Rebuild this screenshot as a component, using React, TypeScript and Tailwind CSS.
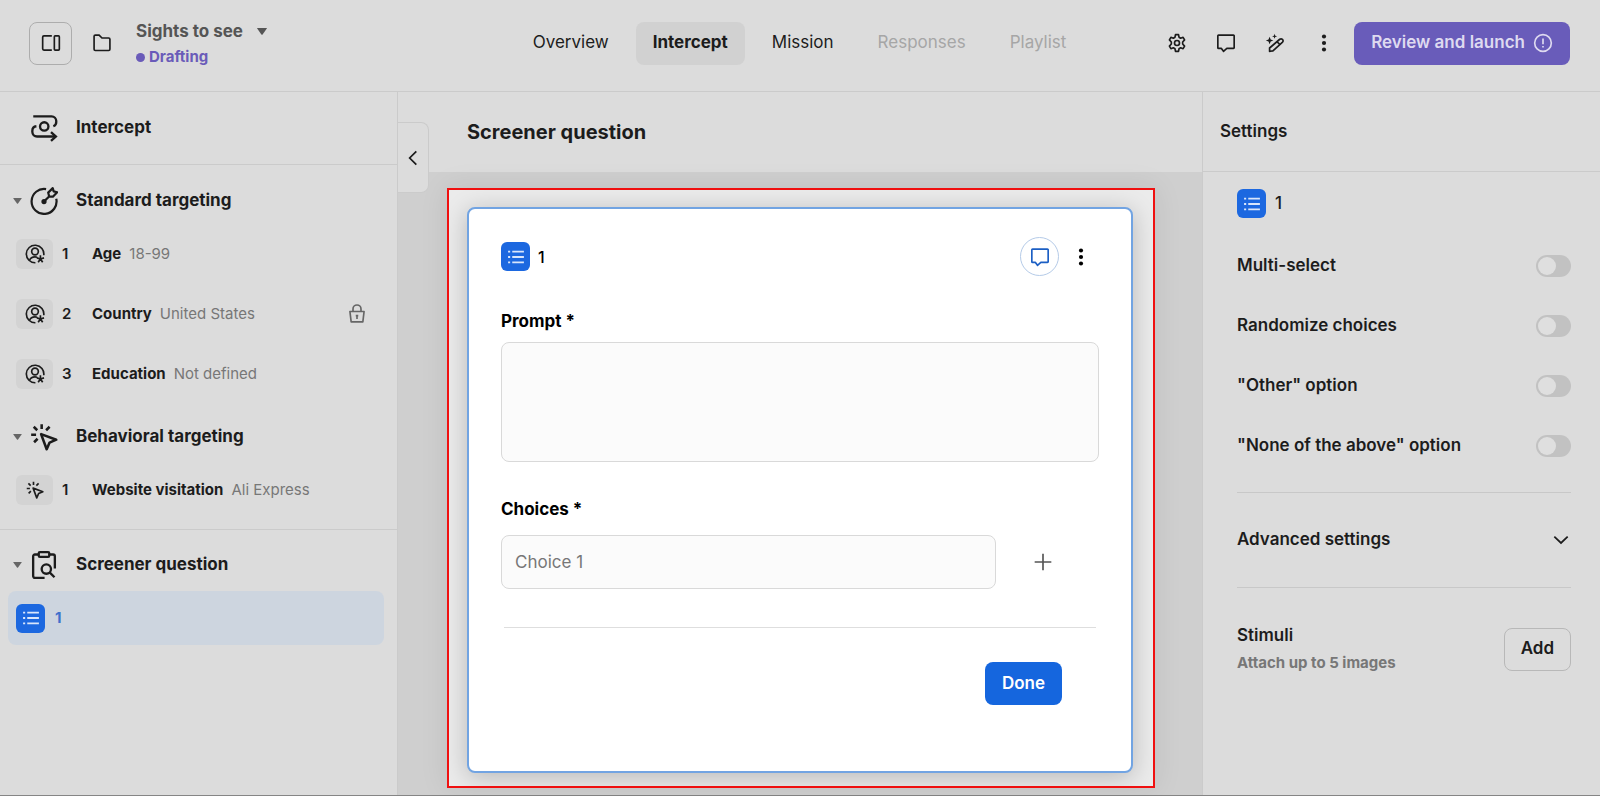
import type { ReactNode } from 'react';
import clsx from 'clsx';

type IconProps = { className?: string };

const Svg = ({ className, children, stroke = 2 }: IconProps & { children: ReactNode; stroke?: number }) => (
    <svg
        viewBox="0 0 24 24"
        className={clsx('shrink-0', className)}
        fill="none"
        stroke="currentColor"
        strokeWidth={stroke}
        aria-hidden="true"
    >
        {children}
    </svg>
);

const PanelIcon = () => (
    <Svg className="size-5">
        <path d="M13 3.500H3.500a1.500 1.500 0 0 0-1.500 1.500v14a1.500 1.500 0 0 0 1.500 1.500H13" />
        <rect x="16" y="3.500" width="6" height="17" rx="1" />
    </Svg>
);

const FolderIcon = () => (
    <Svg className="size-5">
        <path d="M2.500 4a1.500 1.500 0 0 1 1.500-1.500h4.500l3.500 3.500h8a1.500 1.500 0 0 1 1.500 1.500v12a1.500 1.500 0 0 1-1.500 1.500H4a1.500 1.500 0 0 1-1.500-1.500z" />
    </Svg>
);

const CaretIcon = ({ className }: IconProps) => (
    <svg viewBox="0 0 10 7" className={clsx('shrink-0', className)} fill="currentColor" aria-hidden="true">
        <path d="M.4 0h9.200q.6 0 .2.600L5.600 6.500q-.6.700-1.200 0L.2.600Q-.2 0 .4 0z" />
    </svg>
);

const GearIcon = () => (
    <Svg className="size-5">
        <path
            strokeLinejoin="round"
            d="M10.200 2h3.600l.6 3 2 1.200 2.900-1 1.800 3.100L18.800 10.800v2.400l2.300 2.500-1.800 3.100-2.900-1-2 1.200-.6 3h-3.600l-.6-3-2-1.200-2.900 1-1.800-3.100 2.300-2.500v-2.400L2.900 8.300l1.800-3.100 2.900 1 2-1.200z"
        />
        <circle cx="12" cy="12" r="3" />
    </Svg>
);

const CommentIcon = () => (
    <Svg className="size-5">
        <path strokeLinejoin="round" d="M3 2.500h18a.8.8 0 0 1 .8.800v14.400a.8.800 0 0 1-.8.800h-8l-4 3.500-2.500-3.500H3a.8.800 0 0 1-.8-.8V3.300a.8.800 0 0 1 .8-.8z" />
    </Svg>
);

const WandIcon = () => (
    <Svg className="size-5">
        <path strokeLinejoin="round" d="M5.500 22v-4L17.700 7.500q1.700-1.200 3.200.2t.2 3.200L9.500 21.500z" />
        <path d="M14.500 10.500l3.500 3.500" />
        <path
            fill="currentColor"
            stroke="none"
            d="M5.500 4.500l1.300 3.200L10 9l-3.200 1.300-1.300 3.200-1.300-3.200L1 9l3.200-1.300zM11.500 1l.8 2.200 2.200.8-2.200.8-.8 2.200-.8-2.200-2.200-.8 2.200-.8z"
        />
    </Svg>
);

const DotsIcon = () => (
    <svg viewBox="0 0 24 24" className="size-5" fill="currentColor" aria-hidden="true">
        <circle cx="12" cy="4.200" r="2.500" />
        <circle cx="12" cy="12" r="2.500" />
        <circle cx="12" cy="19.800" r="2.500" />
    </svg>
);

const AlertIcon = () => (
    <Svg className="size-5">
        <circle cx="12" cy="12" r="10" />
        <path d="M12 6.500v7M12 15.500v2" />
    </Svg>
);

const PathIcon = () => (
    <Svg className="size-7">
        <path d="M2.800 2h15.700a4 4 0 0 1 4 4v.5a4 4 0 0 1-2.500 4M5.500 10.500a4 4 0 0 0-3.500 4v.8a4 4 0 0 0 4 4h16" />
        <path d="M18 15.500l4.200 3.800-4.200 3.800" />
        <circle cx="12.200" cy="10.700" r="3.600" />
    </Svg>
);

const TargetIcon = () => (
    <Svg className="size-7" stroke={1.900}>
        <path d="M13.800 1.800A10.700 10.700 0 1 0 22.500 10" />
        <circle cx="12" cy="12.500" r="1.300" fill="currentColor" />
        <path strokeLinejoin="round" d="M12 12.500l5-5M16.400 8l-.8-3.200L19.500 1l.8 2.800 3 .7-3.700 3.800z" />
    </Svg>
);

const ClickIcon = ({ className }: IconProps) => (
    <Svg className={className} stroke={2.200}>
        <path strokeLinejoin="round" d="M9.500 9.500l13 4.800-5.700 2.500-2.500 5.700z" />
        <path d="M1 10h4.200M3.200 3.200l3 3M10 1v4.200M16.800 3.200l-3 3M3.500 16.500l3-3" />
    </Svg>
);

const ClipboardIcon = () => (
    <Svg className="size-7">
        <path d="M7 3H4.200A1.500 1.500 0 0 0 2.700 4.500v17A1.500 1.500 0 0 0 4.200 23H12.500M17 3h2.800a1.500 1.500 0 0 1 1.500 1.500V15" />
        <rect x="7.500" y="1" width="9" height="4" rx="1" />
        <circle cx="14" cy="15.500" r="4" />
        <path d="M16.800 18.300l4.200 4.200" />
    </Svg>
);

const PersonIcon = () => (
    <Svg className="size-5" stroke={2}>
        <path d="M12.500 22.500A10.500 10.500 0 1 1 22.500 13.500" />
        <circle cx="12" cy="9" r="4" />
        <path d="M5.500 19.500q1.500-4 6.500-4 1.500 0 2.500.4" />
        <path d="M18.500 13.500v4.500M18.500 18l4.300-1.400M18.500 18l-4.300-1.400M18.500 18l2.700 4M18.500 18l-2.700 4" />
    </Svg>
);

const LockIcon = () => (
    <Svg className="size-5">
        <path strokeLinejoin="round" d="M3.500 9h17L19 21.500H5z" />
        <path d="M7.200 9V6a4.800 4.800 0 0 1 9.600 0v3M12 13v5M10.500 14h3" />
    </Svg>
);

const ListBadge = () => (
    <span className="grid size-[29px] shrink-0 place-items-center rounded-md bg-[#1c68e0] text-[#d9e6fb]">
        <Svg className="size-5" stroke={2.200}>
            <path d="M7.500 5.500h14M7.500 12h14M7.500 18.500h14M2.500 5.500h2.500M2.500 12h2.500M2.500 18.500h2.500" />
        </Svg>
    </span>
);

const tabs = [
    { label: 'Overview' },
    { label: 'Intercept', active: true },
    { label: 'Mission' },
    { label: 'Responses', disabled: true },
    { label: 'Playlist', disabled: true }
];

const standardTargeting = [
    { label: 'Age', value: '18-99' },
    { label: 'Country', value: 'United States', locked: true },
    { label: 'Education', value: 'Not defined' }
];

const options = ['Multi-select', 'Randomize choices', '"Other" option', '"None of the above" option'];

const SectionHeader = ({ icon, title }: { icon: ReactNode; title: string }) => (
    <button type="button" aria-expanded="true" className="flex h-[52px] w-full items-center pl-[13px] text-left">
        <CaretIcon className="h-[6px] w-[9px] text-[#666]" />
        <span className="ml-2 flex w-[46px]">{icon}</span>
        <span className="text-[17px] font-bold">{title}</span>
    </button>
);

type TargetRowProps = { icon: ReactNode; index: number; label: string; value: string; locked?: boolean };

const TargetRow = ({ icon, index, label, value, locked }: TargetRowProps) => (
    <li className="flex h-[54px] items-center pr-[30px] pl-4 text-[15px]">
        <span className="grid h-[30px] w-[37px] place-items-center rounded-md bg-[#d3d3d3]">{icon}</span>
        <span className="ml-[9px] w-[30px] font-semibold">{index}</span>
        <span className="font-bold">{label}</span>
        <span className="ml-2 text-[#777]">{value}</span>
        {locked && (
            <span className="ml-auto text-[#666]">
                <LockIcon />
            </span>
        )}
    </li>
);

const Header = () => (
    <header className="flex h-[92px] items-center justify-between border-b border-[#cbcbcb] pr-[30px] pb-[5px] pl-[29px]">
        <div className="flex flex-1 items-center">
            <button
                type="button"
                aria-label="Toggle panel"
                className="grid size-[43px] place-items-center rounded-lg border border-[#adadad]"
            >
                <PanelIcon />
            </button>
            <button type="button" aria-label="Folder" className="ml-5">
                <FolderIcon />
            </button>
            <div className="ml-6 pt-1">
                <button type="button" className="flex items-center gap-[14px] text-[17px] leading-6 font-bold text-[#555]">
                    Sights to see
                    <CaretIcon className="h-[7px] w-[10px]" />
                </button>
                <p className="flex items-center gap-1 text-[15px] leading-7 font-bold text-[#6a5bb9]">
                    <span className="size-[9px] rounded-full bg-[#6a5bb9]" />
                    Drafting
                </p>
            </div>
        </div>

        <nav className="flex gap-[10px] text-[17px]">
            {tabs.map(({ label, active, disabled }) => (
                <button
                    key={label}
                    type="button"
                    disabled={disabled}
                    className={clsx(
                        'h-[43px] rounded-lg px-[17px]',
                        active && 'bg-[#d1d1d1] font-bold',
                        disabled && 'text-[#a6a6a6]'
                    )}
                >
                    {label}
                </button>
            ))}
        </nav>

        <div className="flex flex-1 items-center justify-end">
            <div className="mr-5 flex items-center gap-[29px]">
                <button type="button" aria-label="Settings">
                    <GearIcon />
                </button>
                <button type="button" aria-label="Comments">
                    <CommentIcon />
                </button>
                <button type="button" aria-label="Magic edit">
                    <WandIcon />
                </button>
                <button type="button" aria-label="More">
                    <DotsIcon />
                </button>
            </div>
            <button
                type="button"
                className="flex h-[43px] items-center gap-2 rounded-lg bg-[#695cba] px-[17px] text-[17px] font-semibold text-[#dedaf0]"
            >
                Review and launch
                <AlertIcon />
            </button>
        </div>
    </header>
);

const Sidebar = () => (
    <aside className="w-[398px] shrink-0 border-r border-[#cbcbcb]">
        <div className="flex h-[73px] items-center border-b border-[#cbcbcb] pl-[30px]">
            <span className="flex w-[46px]">
                <PathIcon />
            </span>
            <h2 className="text-[17px] font-bold">Intercept</h2>
        </div>

        <div className="flex flex-col gap-[10px] border-b border-[#cbcbcb] pt-[10px] pb-3">
            <section>
                <SectionHeader icon={<TargetIcon />} title="Standard targeting" />
                <ul className="flex flex-col gap-[6px]">
                    {standardTargeting.map((row, i) => (
                        <TargetRow key={row.label} icon={<PersonIcon />} index={i + 1} {...row} />
                    ))}
                </ul>
            </section>
            <section>
                <SectionHeader icon={<ClickIcon className="size-7" />} title="Behavioral targeting" />
                <ul>
                    <TargetRow
                        icon={<ClickIcon className="size-[18px]" />}
                        index={1}
                        label="Website visitation"
                        value="Ali Express"
                    />
                </ul>
            </section>
        </div>

        <section className="pt-[9px]">
            <SectionHeader icon={<ClipboardIcon />} title="Screener question" />
            <button
                type="button"
                className="ml-2 flex h-[54px] w-[376px] items-center gap-[10px] rounded-lg bg-[#cdd5df] pl-2 text-[15px] font-bold text-[#3f70cc]"
            >
                <ListBadge />1
            </button>
        </section>
    </aside>
);

const QuestionCard = () => (
    <form
        className="h-full rounded-lg border-2 border-[#72a4e2] bg-white px-8 pt-7 pb-[66px] text-black shadow-[0_4px_24px_rgba(0,0,0,0.22)]"
        onSubmit={(e) => e.preventDefault()}
    >
        <div className="flex items-center">
            <ListBadge />
            <span className="ml-2 text-[16px] font-medium">1</span>
            <button
                type="button"
                aria-label="Comment"
                className="ml-auto grid size-[39px] place-items-center rounded-full border border-[#b5cbe8] text-[#1c5fc4]"
            >
                <CommentIcon />
            </button>
            <button type="button" aria-label="More" className="ml-1 grid size-9 place-items-center">
                <DotsIcon />
            </button>
        </div>

        <label htmlFor="prompt" className="mt-[33px] block text-[17px] leading-6 font-bold">
            Prompt *
        </label>
        <textarea
            id="prompt"
            className="mt-[9px] block h-[120px] w-full resize-none rounded-lg border border-[#d9d9d9] bg-[#fbfbfb] p-3"
        />

        <label htmlFor="choice" className="mt-[35px] block text-[17px] leading-6 font-bold">
            Choices *
        </label>
        <div className="mt-[14px] flex items-center">
            <input
                id="choice"
                type="text"
                placeholder="Choice 1"
                className="h-[54px] min-w-0 flex-1 rounded-lg border border-[#d9d9d9] bg-[#fbfbfb] px-[13px] text-[17px] placeholder:text-[#777]"
            />
            <button type="button" aria-label="Add choice" className="mr-[46px] ml-[37px] text-[#555]">
                <Svg className="size-5">
                    <path d="M12 2v20M2 12h20" />
                </Svg>
            </button>
        </div>

        <hr className="mx-[3px] mt-[38px] border-[#dedede]" />
        <div className="mt-[34px] flex justify-end pr-[37px]">
            <button type="submit" className="h-[43px] rounded-lg bg-[#1566de] px-[17px] text-[17px] font-semibold text-white">
                Done
            </button>
        </div>
    </form>
);

const SettingsPanel = () => (
    <aside className="w-[398px] shrink-0 border-l border-[#cbcbcb]">
        <h2 className="flex h-20 items-center border-b border-[#cbcbcb] pl-[17px] text-[17px] font-semibold">Settings</h2>
        <div className="pt-[17px] pr-[29px] pl-[34px]">
            <div className="flex items-center gap-[9px] text-[17px] font-medium">
                <ListBadge />1
            </div>
            <div className="mt-[18px] border-b border-[#c8c8c8] pb-4">
                {options.map((option) => (
                    <label key={option} className="flex h-[60px] items-center justify-between text-[17px] font-semibold">
                        {option}
                        <input
                            type="checkbox"
                            role="switch"
                            className="h-[22px] w-[35px] appearance-none rounded-full bg-[#c2c2c2] p-[2px] before:block before:size-[18px] before:rounded-full before:bg-[#dfdfdf] checked:bg-[#1c68e0] checked:before:translate-x-[13px]"
                        />
                    </label>
                ))}
            </div>
            <button
                type="button"
                aria-expanded="false"
                className="flex h-[95px] w-full items-center justify-between border-b border-[#c8c8c8] pr-[2px] text-[17px] font-semibold"
            >
                Advanced settings
                <Svg className="size-4" stroke={2.600}>
                    <path d="M2 7l10 9.500L22 7" />
                </Svg>
            </button>
            <div className="mt-[35px] flex items-center justify-between">
                <div>
                    <h3 className="text-[17px] leading-6 font-semibold">Stimuli</h3>
                    <p className="mt-1 text-[15px] leading-6 font-bold text-[#777]">Attach up to 5 images</p>
                </div>
                <button type="button" className="h-[43px] rounded-lg border border-[#b8b8b8] px-4 text-[17px] font-semibold">
                    Add
                </button>
            </div>
        </div>
    </aside>
);

const App = () => (
    <div className="flex min-h-screen flex-col border-b border-[#858585] bg-[#dcdcdc] font-['Inter',sans-serif] text-[#1c1c1c]">
        <Header />
        <div className="flex flex-1">
            <Sidebar />
            <main className="relative flex min-w-0 flex-1 flex-col bg-[#cfcfcf]">
                <div className="flex h-20 items-center bg-[#dcdcdc] pl-[69px]">
                    <h1 className="text-[20px] font-bold">Screener question</h1>
                </div>
                <button
                    type="button"
                    aria-label="Collapse sidebar"
                    className="absolute top-[30px] left-0 grid h-[71px] w-[31px] place-items-center rounded-r-lg border border-l-0 border-[#cbcbcb] bg-[#dcdcdc]"
                >
                    <Svg className="size-4" stroke={2.600}>
                        <path d="M17 2L7 12l10 10" />
                    </Svg>
                </button>
                <div className="mt-4 mr-[47px] mb-[7px] ml-[49px] flex-1 overflow-hidden border-2 border-[#f01010] bg-[#ebebeb] pt-[17px] pr-5 pb-[13px] pl-[18px] shadow-[0_0_28px_rgba(0,0,0,0.08)]">
                    <QuestionCard />
                </div>
            </main>
            <SettingsPanel />
        </div>
    </div>
);

export default App;
